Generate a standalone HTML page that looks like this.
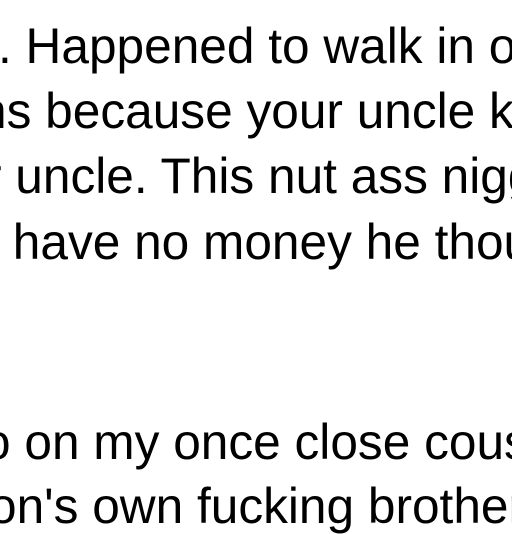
<!DOCTYPE html>
<html><head><style>
html,body{margin:0;padding:0;width:512px;height:512px;overflow:hidden;background:#fff}
.l{position:absolute;white-space:pre;font-family:"Liberation Sans",Arial,sans-serif;font-size:49.6px;color:#000;line-height:1}
</style></head><body>
<div class="l" style="left:-2px;top:22px">. Happened to walk in on</div>
<div class="l" style="left:-21px;top:87px">ns because your uncle kn</div>
<div class="l" style="left:-15px;top:152px">r uncle. This nut ass nigg</div>
<div class="l" style="left:-1px;top:218px"> have no money he thoug</div>
<div class="l" style="left:-17px;top:418px">o on my once close cousi</div>
<div class="l" style="left:-11px;top:482px">on's own fucking brother</div>
</body></html>
